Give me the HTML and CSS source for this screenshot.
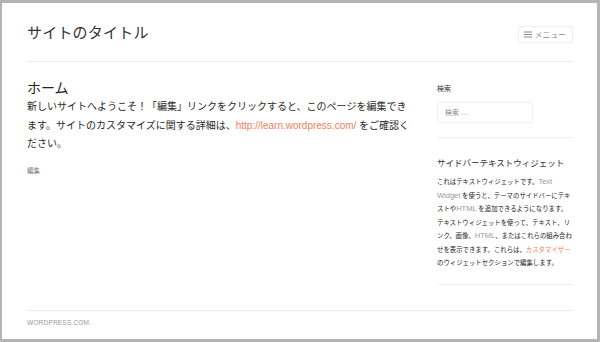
FILE: index.html
```html
<!DOCTYPE html>
<html lang="ja">
<head>
    <meta charset="UTF-8">
    <meta name="viewport" content="width=device-width, initial-scale=1.0">
    <title>サイトのタイトル</title>
    <link rel="stylesheet" href="styles.css">
</head>
<body>
    <div class="page">
        <header class="site-header">
            <h1 class="site-title">サイトのタイトル</h1>
            <button class="menu-toggle">
                <svg class="menu-icon" width="8" height="7" viewBox="0 0 8 7">
                    <path d="M0 1h8M0 3.5h8M0 6h8" stroke="#888" stroke-width="1"/>
                </svg>
                メニュー
            </button>
        </header>

        <div class="site-content">
            <main class="content-area">
                <h2 class="entry-title">ホーム</h2>
                <p class="entry-text">新しいサイトへようこそ！「編集」リンクをクリックすると、このページを編集できます。サイトのカスタマイズに関する詳細は、<a href="#">http://learn.wordpress.com/</a> をご確認ください。</p>
                <div class="entry-meta">編集</div>
            </main>

            <aside class="sidebar">
                <section class="widget">
                    <h3 class="widget-title small">検索</h3>
                    <input type="search" class="search-field" placeholder="検索 …">
                </section>
                <section class="widget">
                    <h3 class="widget-title">サイドバーテキストウィジェット</h3>
                    <p class="widget-text">これはテキストウィジェットです。<span class="latin">Text Widget</span> を使うと、テーマのサイドバーにテキストや<span class="latin">HTML</span> を追加できるようになります。テキストウィジェットを使って、テキスト、リンク、画像、<span class="latin">HTML</span>、またはこれらの組み合わせを表示できます。これらは、<a href="#">カスタマイザー</a>のウィジェットセクションで編集します。</p>
                </section>
            </aside>
        </div>

        <footer class="site-footer">WORDPRESS.COM.</footer>
    </div>
</body>
</html>
```

FILE: styles.css
```css
html, body { margin: 0; height: 100%; }
body { background: #b4b4b4; font-family: "Liberation Sans", "Noto Sans CJK JP", sans-serif; color: #333; }
.page { box-sizing: border-box; height: 336px; margin: 3px 3px 3px 2px; background: #fff; padding: 0 24px 0 25px; display: flex; flex-direction: column; }

.site-header { height: 58px; display: flex; align-items: center; justify-content: space-between; border-bottom: 1.5px solid #ececec; }
.site-title { margin: 0; font-size: 15px; font-weight: normal; line-height: 1; letter-spacing: 0.2px; color: #333; }
.menu-toggle { display: flex; align-items: center; gap: 3px; height: 17px; margin-top: 4px; padding: 0 6px 0 5px; border: 1px solid #efefef; border-radius: 2px; background: #fff; font-family: inherit; font-size: 7.5px; letter-spacing: 0.3px; color: #888; }
.menu-icon { display: block; }

.site-content { display: grid; grid-template-columns: 384px 136px; column-gap: 26px; padding-top: 16px; }

.entry-title { margin: 0; font-size: 14px; font-weight: normal; line-height: 20px; color: #222; }
.entry-text { margin: 0; font-size: 10px; line-height: 18.5px; color: #2a2a2a; }
.entry-text a, .widget-text a { color: #f4805e; text-decoration: none; }
.entry-meta { margin-top: 12px; font-size: 6.5px; line-height: 10px; color: #777; }

.widget { border-bottom: 1px solid #f0f0f0; padding-bottom: 14px; }
.widget + .widget { padding-top: 19px; }
.widget-title { margin: 0; font-size: 8.5px; font-weight: normal; line-height: 12px; color: #333; }
.widget-title.small { margin-top: 6px; font-size: 7px; line-height: 10px; }
.search-field { display: block; box-sizing: border-box; width: 96px; height: 21px; margin-top: 8px; padding: 0 7px; border: 1px solid #f0f0f0; border-radius: 2px; font-family: inherit; font-size: 7px; color: #333; }
.search-field::placeholder { color: #888; }
.widget-text { margin: 6px 0 0; font-size: 6.4px; line-height: 13.5px; color: #222; }
.latin { font-size: 7.5px; color: #999; }

.site-footer { margin-top: auto; margin-bottom: 11px; padding-top: 7px; border-top: 1.5px solid #ececec; font-size: 6.5px; line-height: 10px; letter-spacing: 0.2px; color: #999; }
```
